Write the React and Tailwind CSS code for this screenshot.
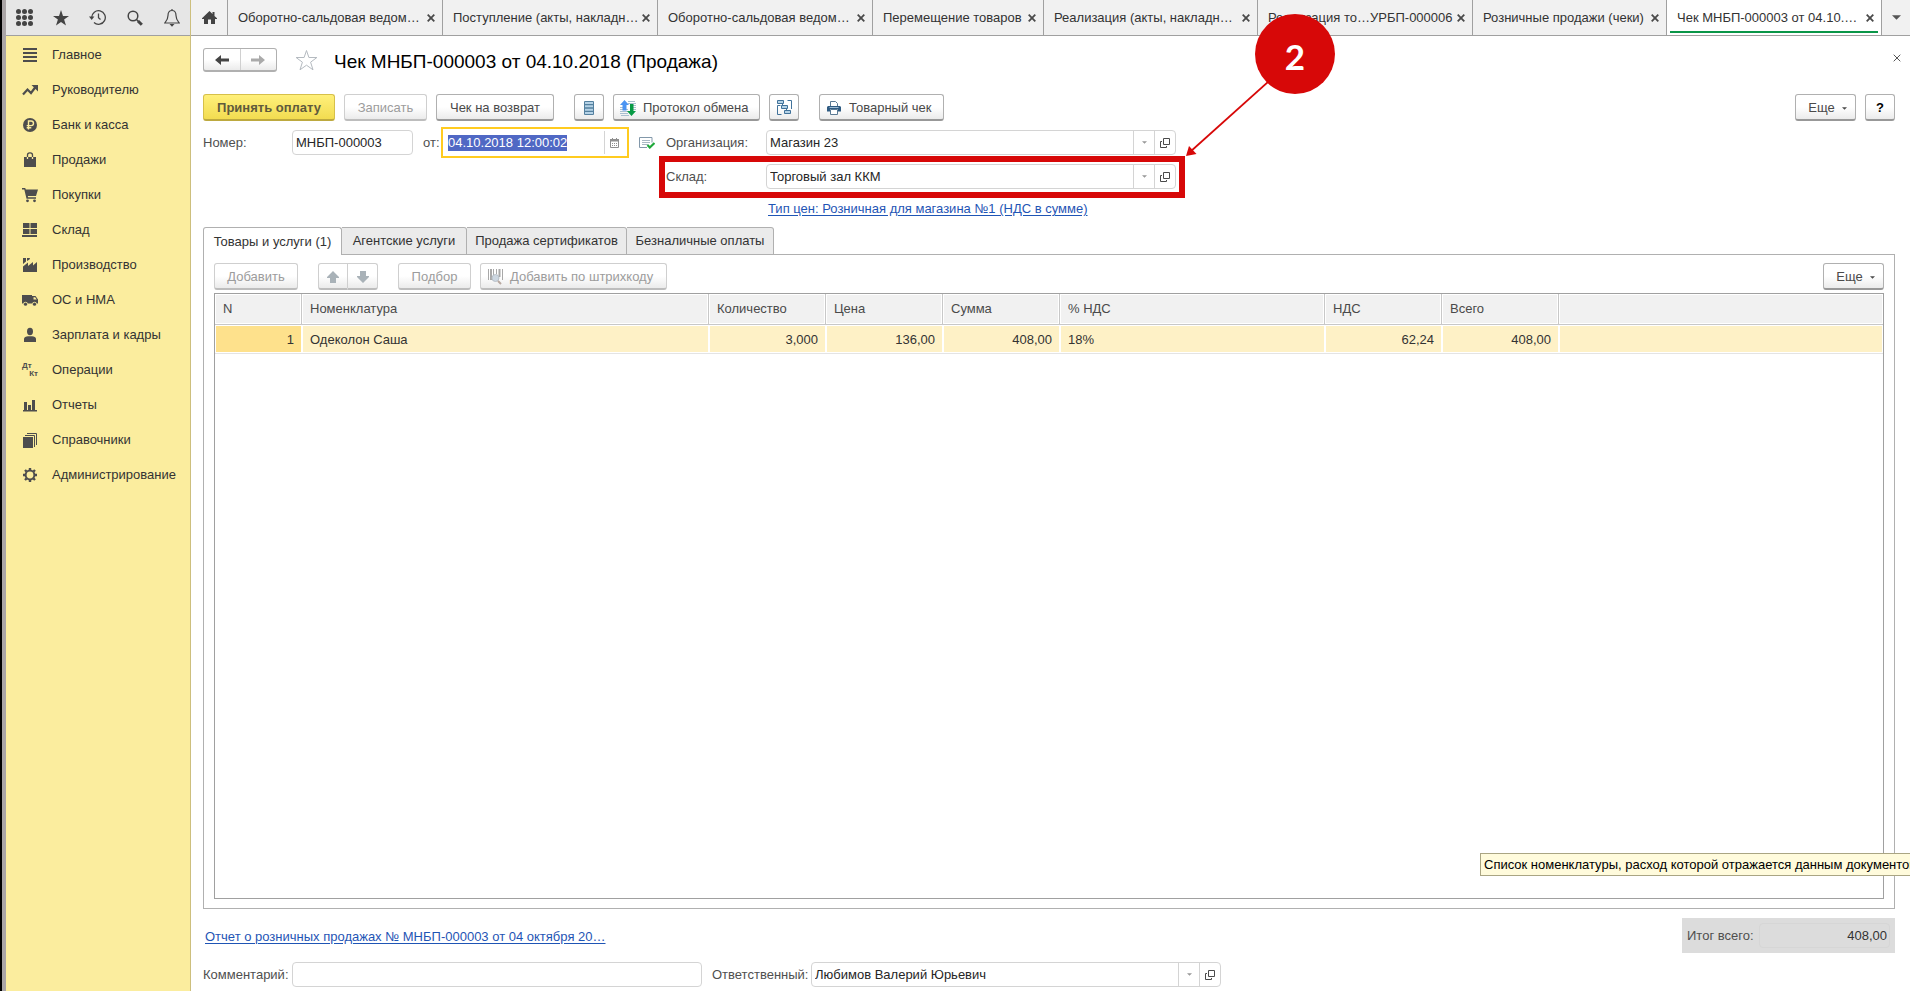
import { useEffect, useRef } from 'react';

const MENU = [
  ['Главное', 'lines'],
  ['Руководителю', 'trend'],
  ['Банк и касса', 'ruble'],
  ['Продажи', 'bag'],
  ['Покупки', 'cart'],
  ['Склад', 'boxes'],
  ['Производство', 'factory'],
  ['ОС и НМА', 'truck'],
  ['Зарплата и кадры', 'person'],
  ['Операции', 'dtkt'],
  ['Отчеты', 'chart'],
  ['Справочники', 'books'],
  ['Администрирование', 'gear'],
];

const WINDOWS = [
  ['Оборотно-сальдовая ведом…', 'w-[215px]'],
  ['Поступление (акты, накладн…', 'w-[215px]'],
  ['Оборотно-сальдовая ведом…', 'w-[215px]'],
  ['Перемещение товаров', 'w-[171px]'],
  ['Реализация (акты, накладн…', 'w-[214px]'],
  ['Реализация то…УРБП-000006', 'w-[215px]'],
  ['Розничные продажи (чеки)', 'w-[194px]'],
  ['Чек МНБП-000003 от 04.10.…', 'w-[215px]'],
];

const MENU_ART = {
  lines: <path d="M1 1h14v2H1zM1 5h14v2H1zM1 9h14v2H1zM1 13h14v2H1z" />,
  trend: (
    <>
      <path d="M1 12.500 5.500 7.500l3.500 3.500L13.500 5" fill="none" stroke="currentColor" strokeWidth="2.200" />
      <path d="M9.500 3H16v6.500z" />
    </>
  ),
  ruble: (
    <>
      <circle cx="8" cy="8" r="7" />
      <path d="M6.500 12.500V4h2.700a2.200 2.200 0 0 1 0 4.600H4.700M4.700 10.700h4.600" fill="none" stroke="#fbed9e" strokeWidth="1.400" />
    </>
  ),
  bag: (
    <>
      <path d="M2 5h12v10H2z" />
      <path d="M5.500 5.500V3A2.200 2.200 0 0 1 7.700.800h.6A2.200 2.200 0 0 1 10.500 3v2.500" fill="none" stroke="currentColor" strokeWidth="1.300" />
      <path d="M5.500 5v2M10.500 5v2" stroke="#fbed9e" strokeWidth="1.300" />
    </>
  ),
  cart: (
    <>
      <path d="M0 1h3.200l.6 1.500H16L14 9H5.800l.3 1.300H14v1.500H4.500L2.300 2.500H0z" />
      <circle cx="5.500" cy="13.800" r="1.400" />
      <circle cx="12.500" cy="13.800" r="1.400" />
    </>
  ),
  boxes: <path d="M1 1h6.500v5H1zM8.500 1H15v5H8.500zM1 7h6.500v5H1zM8.500 7H15v5H8.500zM0 13h15v2H0z" />,
  factory: <path d="M1 15V9.500L6 5.500V9l5-4v3.500l4-3.500v10zM1 7V1h3v3.500zM5 4V1h3l-.5 1.500z" />,
  truck: (
    <>
      <path d="M0 3h10v8.500H0zM10 4h3.500L16 7.500v4h-6z" />
      <path d="M11.500 5.200h1.700l1.500 2.300h-3.200z" fill="#fbed9e" />
      <circle cx="3.500" cy="12" r="2.200" fill="#fbed9e" />
      <circle cx="12.500" cy="12" r="2.200" fill="#fbed9e" />
      <circle cx="3.500" cy="12.200" r="1.600" />
      <circle cx="12.500" cy="12.200" r="1.600" />
    </>
  ),
  person: (
    <>
      <ellipse cx="8" cy="4.500" rx="3" ry="3.700" />
      <path d="M2 15v-3c0-1.800 2-2.800 4-2.800h4c2 0 4 1 4 2.800v3z" />
    </>
  ),
  chart: <path d="M2 5h3v8h1V8h3v5h1V3h3v10h2v1.500H1V13h1z" />,
  books: (
    <>
      <path d="M1 5h10v11H1z" />
      <path d="M3 3.500h9.500V15M5 1.500h9.500V13" fill="none" stroke="currentColor" />
    </>
  ),
  gear: (
    <>
      <circle cx="8" cy="8" r="4.400" fill="none" stroke="currentColor" strokeWidth="2" />
      <path
        d="M8 1v2M8 13v2M1 8h2M13 8h2M3 3l1.500 1.500M11.500 11.500 13 13M3 13l1.500-1.500M11.500 4.500 13 3"
        fill="none"
        stroke="currentColor"
        strokeWidth="2.400"
      />
    </>
  ),
};

function MenuIcon({ kind }) {
  if (kind === 'dtkt') {
    return (
      <span className="flex h-4 w-4 flex-col text-[8px] leading-2 font-bold text-[#4d4d4d]" aria-hidden="true">
        <span>Дт</span>
        <span className="self-end">Кт</span>
      </span>
    );
  }
  return (
    <svg className="h-4 w-4 shrink-0 text-[#4d4d4d]" viewBox="0 0 16 16" fill="currentColor" aria-hidden="true">
      {MENU_ART[kind]}
    </svg>
  );
}

function Cross({ className }) {
  return (
    <svg className={className} viewBox="0 0 8 8" fill="none" stroke="currentColor" aria-hidden="true">
      <path d="M.7.700l6.600 6.600M7.300.700.700 7.300" />
    </svg>
  );
}

function Caret({ className }) {
  return (
    <svg className={className} viewBox="0 0 10 5" fill="currentColor" aria-hidden="true">
      <path d="M0 0h10L5 5z" />
    </svg>
  );
}

const BUTTON = 'flex h-[27px] shrink-0 items-center rounded-[3px] border border-b-2 bg-linear-to-b from-white from-50% to-[#ebebeb] pt-px whitespace-nowrap';
const ENABLED = 'border-[#b0b0b0] border-b-[#989898] text-[#4a4a4a]';
const DISABLED = 'border-[#cfcfcf] border-b-[#bdbdbd] text-[#9c9c9c]';

function Button({ children, className = '', disabled = false, withIcon = false, label }) {
  return (
    <button
      type="button"
      disabled={disabled}
      aria-label={label}
      className={`${BUTTON} ${disabled ? DISABLED : ENABLED} ${withIcon ? 'gap-[7px] pl-[6px]' : 'justify-center'} ${className}`}
    >
      {children}
    </button>
  );
}

function MoreButton() {
  return (
    <Button className="w-[61px] gap-[7px] pl-1">
      Еще
      <Caret className="mt-px h-[3px] w-[5px]" />
    </Button>
  );
}

function PickField({ id, value }) {
  return (
    <div className="flex h-[25px] w-[410px] overflow-hidden rounded-[4px] border border-[#d4d4d4] bg-white">
      <input id={id} defaultValue={value} className="min-w-0 flex-1 px-[3px] text-[#262626] outline-none" />
      <button type="button" aria-label="Выбрать из списка" className="flex w-[21px] items-center justify-center border-l border-[#d4d4d4] text-[#999]">
        <Caret className="h-[3px] w-[5px]" />
      </button>
      <button type="button" aria-label="Открыть" className="flex w-[21px] items-center justify-center border-l border-[#d4d4d4] text-[#4a4a4a]">
        <svg className="h-[10px] w-[10px]" viewBox="0 0 10 10" fill="none" stroke="currentColor" aria-hidden="true">
          <path d="M3.500.500h6v6h-6zM2 3.500H.500v6h6V8" />
        </svg>
      </button>
    </div>
  );
}

function SideTools() {
  const tool = 'flex h-[35px] w-[37px] items-center justify-center text-[#444]';
  return (
    <div className="flex h-9 border-b border-[#a0a0a0] bg-[#e6e6e6]">
      <button type="button" aria-label="Разделы" className={tool}>
        <svg className="h-[17px] w-[17px]" viewBox="0 0 17 17" fill="currentColor" aria-hidden="true">
          {[2.5, 8.5, 14.5].map((y) => [2.5, 8.5, 14.5].map((x) => <circle key={`${x}-${y}`} cx={x} cy={y} r="2.500" />))}
        </svg>
      </button>
      <button type="button" aria-label="Избранное" className={tool}>
        <svg className="h-4 w-4" viewBox="0 0 16 16" fill="currentColor" aria-hidden="true">
          <path d="M8 0l2 5.900h6l-4.900 3.700 1.900 6L8 12l-5 3.600 1.900-6L0 5.900h6z" />
        </svg>
      </button>
      <button type="button" aria-label="История" className={tool}>
        <svg className="h-[17px] w-[17px]" viewBox="0 0 17 17" fill="none" stroke="currentColor" strokeWidth="1.300" aria-hidden="true">
          <path d="M2.700 8.500A6.800 6.800 0 1 1 5 13.600M9.500 4.500v4.200l2 1.800" />
          <path d="M0 7.500h5.400L2.700 11z" fill="currentColor" stroke="none" />
        </svg>
      </button>
      <button type="button" aria-label="Поиск" className={tool}>
        <svg className="h-4 w-4" viewBox="0 0 16 16" fill="none" stroke="currentColor" aria-hidden="true">
          <circle cx="6" cy="6" r="4.800" strokeWidth="1.500" />
          <path d="M9.500 9.500l2 2" strokeWidth="1.500" />
          <path d="M11 11l3.800 3.800" strokeWidth="3" />
        </svg>
      </button>
      <button type="button" aria-label="Оповещения" className={tool}>
        <svg className="h-[18px] w-4" viewBox="0 0 16 18" fill="none" stroke="currentColor" strokeWidth="1.200" aria-hidden="true">
          <path d="M8 1.500c-3 0-4 2-4 5 0 4-1.500 5.500-3.200 7.500h14.400C13.500 12 12 10.500 12 6.500c0-3-1-5-4-5zM8 0v1.500" />
          <path d="M5.500 15h5L8 17.800z" fill="currentColor" stroke="none" />
        </svg>
      </button>
    </div>
  );
}

function WindowTabs() {
  return (
    <div className="flex h-9 border-b border-[#a0a0a0] bg-[#f1f1f1] text-[#333]">
      <button type="button" aria-label="Начальная страница" className="flex w-[37px] shrink-0 items-center justify-center border-r border-[#a0a0a0] text-[#444]">
        <svg className="h-[13px] w-[15px]" viewBox="0 0 15 13" fill="currentColor" aria-hidden="true">
          <path d="M7.500 0l3 3V1h2v4L15 7.300V8h-2v5H9V8.500H6V13H2V8H0v-.7z" />
        </svg>
      </button>
      {WINDOWS.map(([title, width], i) => {
        const active = i === WINDOWS.length - 1;
        return (
          <div key={i} className={`relative flex items-center justify-between border-r border-[#a0a0a0] pr-[7px] pl-[10px] ${width} ${active ? 'bg-white' : ''}`}>
            <a href="#window" className="whitespace-nowrap">{title}</a>
            <button type="button" aria-label="Закрыть окно" className="flex shrink-0 items-center text-[#4a4a4a]">
              <Cross className="h-2 w-2 stroke-[1.8]" />
            </button>
            {active && <span className="absolute inset-x-[3px] bottom-0.5 h-0.5 bg-[#0a9648]" />}
          </div>
        );
      })}
      <button type="button" aria-label="Список окон" className="flex flex-1 items-center justify-center text-[#555]">
        <Caret className="h-[5px] w-[9px]" />
      </button>
    </div>
  );
}

function Callout() {
  return (
    <>
      <div className="pointer-events-none absolute -top-2 -left-[7px] h-[42px] w-[526px] border-6 border-[#d70808]" />
      <svg className="pointer-events-none absolute -top-[83px] left-[519px] h-[76px] w-[84px] text-[#d70808]" viewBox="0 0 84 76" fill="currentColor" aria-hidden="true">
        <path d="M84 0 5 71" stroke="currentColor" strokeWidth="1.700" />
        <path d="M1 75l3-10 7.500 8z" />
      </svg>
      <div className="pointer-events-none absolute -top-[150px] left-[589px] z-20 flex h-20 w-20 items-center justify-center rounded-full bg-[#d70808] pt-1 font-['Lato',sans-serif] text-[35px] font-bold text-white">
        2
      </div>
    </>
  );
}

function DocumentTabs() {
  return (
    <div className="relative z-10 -mb-px flex h-7 text-[#333]" role="tablist">
      <button type="button" role="tab" aria-selected="true" className="w-[139px] rounded-t-[3px] border border-b-0 border-[#b0b0b0] bg-white">
        Товары и услуги (1)
      </button>
      <button type="button" role="tab" aria-selected="false" className="w-[125px] rounded-tr-[3px] border border-l-0 border-[#b0b0b0] bg-[#ebebeb]">
        Агентские услуги
      </button>
      <button type="button" role="tab" aria-selected="false" className="w-[160px] rounded-tr-[3px] border border-l-0 border-[#b0b0b0] bg-[#ebebeb]">
        Продажа сертификатов
      </button>
      <button type="button" role="tab" aria-selected="false" className="w-[147px] rounded-tr-[3px] border border-l-0 border-[#b0b0b0] bg-[#ebebeb]">
        Безналичные оплаты
      </button>
    </div>
  );
}

function Arrow({ className }) {
  return (
    <svg className={className} viewBox="0 0 12 12" fill="currentColor" aria-hidden="true">
      <path d="M6 0l6 6v1H9v5H3V7H0V6z" />
    </svg>
  );
}

function GoodsTable() {
  const head = 'border-r border-b border-[#c8c8c8] bg-[#f1f1f1] px-2 text-left font-normal text-[#4a4a4a] shadow-[inset_0_0_0_1px_white]';
  const cell = 'border-b border-[#e4e4e4] px-2 pt-0.5 shadow-[inset_0_0_0_1px_white]';
  return (
    <div className="mt-[3px] flex-1 border border-[#a0a0a0] bg-white">
      <table className="w-full table-fixed border-separate border-spacing-0 text-[#333]">
        <colgroup>
          <col className="w-[87px]" />
          <col className="w-[407px]" />
          <col className="w-[117px]" />
          <col className="w-[117px]" />
          <col className="w-[117px]" />
          <col className="w-[265px]" />
          <col className="w-[117px]" />
          <col className="w-[117px]" />
          <col />
        </colgroup>
        <thead>
          <tr className="h-[31px]">
            {['N', 'Номенклатура', 'Количество', 'Цена', 'Сумма', '% НДС', 'НДС', 'Всего'].map((title) => (
              <th key={title} scope="col" className={head}>{title}</th>
            ))}
            <td className="border-b border-[#c8c8c8] bg-[#f1f1f1] shadow-[inset_0_0_0_1px_white]" />
          </tr>
        </thead>
        <tbody>
          <tr className="h-[29px] bg-[#fef1c6]">
            <td className={`${cell} bg-[#fee18c] text-right`}>1</td>
            <td className={cell}>Одеколон Саша</td>
            <td className={`${cell} text-right`}>3,000</td>
            <td className={`${cell} text-right`}>136,00</td>
            <td className={`${cell} text-right`}>408,00</td>
            <td className={cell}>18%</td>
            <td className={`${cell} text-right`}>62,24</td>
            <td className={`${cell} text-right`}>408,00</td>
            <td className={cell} />
          </tr>
        </tbody>
      </table>
    </div>
  );
}

export default function App() {
  const dateRef = useRef(null);
  useEffect(() => {
    dateRef.current.focus();
    dateRef.current.select();
  }, []);

  return (
    <div className="flex min-h-screen overflow-hidden bg-white font-['Liberation_Sans',Arial,sans-serif] text-[13px] leading-4">
      <div className="w-[6px] shrink-0 border-l-2 border-black bg-[#aaa5a6]" />
      <aside className="flex w-[185px] shrink-0 flex-col border-r border-[#cdbf7d] bg-[#fbed9e]">
        <SideTools />
        <nav className="flex flex-col pt-px text-[#333]">
          {MENU.map(([title, icon]) => (
            <a key={title} href="#section" className="flex h-[35px] items-center gap-[14px] pl-4">
              <MenuIcon kind={icon} />
              {title}
            </a>
          ))}
        </nav>
      </aside>

      <div className="flex min-w-0 flex-1 flex-col">
        <WindowTabs />
        <main className="relative flex flex-1 flex-col pt-3 pr-[15px] pb-1 pl-3 text-[#4f4f4f]">
          <button type="button" aria-label="Закрыть" className="absolute top-[18px] right-[9px] text-[#555]">
            <Cross className="h-2 w-2 stroke-1" />
          </button>

          <div className="flex h-6 items-center">
            <div className="flex h-6 w-[74px] rounded-[3px] border border-b-2 border-[#b0b0b0] bg-linear-to-b from-white from-50% to-[#ebebeb]">
              <button type="button" aria-label="Назад" className="flex flex-1 items-center justify-center text-[#444]">
                <svg className="h-[10px] w-[14px]" viewBox="0 0 14 10" fill="currentColor" aria-hidden="true">
                  <path d="M0 5l6-5v3.500h8v3H6V10z" />
                </svg>
              </button>
              <button type="button" aria-label="Вперед" disabled className="flex flex-1 items-center justify-center border-l border-[#d0d0d0] text-[#aaa]">
                <svg className="h-[10px] w-[14px]" viewBox="0 0 14 10" fill="currentColor" aria-hidden="true">
                  <path d="M14 5L8 0v3.500H0v3h8V10z" />
                </svg>
              </button>
            </div>
            <button type="button" aria-label="В избранное" className="ml-[18px] text-[#b4bac0]">
              <svg className="h-[22px] w-[23px]" viewBox="0 0 23 22" fill="none" stroke="currentColor" aria-hidden="true">
                <path d="M11.500 1.500l2.400 7h8l-6.300 4.700 2.400 7.600-6.500-4.600L5 20.800l2.400-7.600L1.100 8.500h8z" />
              </svg>
            </button>
            <h1 className="ml-4 pt-1 text-[19px] leading-6 text-black">Чек МНБП-000003 от 04.10.2018 (Продажа)</h1>
          </div>

          <div className="mt-[22px] flex items-center">
            <button type="button" className="flex h-[27px] w-[132px] items-center justify-center rounded-[3px] border border-b-2 border-[#d6c04a] border-b-[#bda93f] bg-linear-to-b from-[#fff07a] to-[#f2dc50] pt-px font-bold text-[#5f5a3c]">
              Принять оплату
            </button>
            <Button disabled className="ml-[9px] w-[83px]">Записать</Button>
            <Button className="ml-[9px] w-[118px]">Чек на возврат</Button>
            <Button label="Реестр" className="ml-5 w-[30px]">
              <svg className="h-[14px] w-[10px]" viewBox="0 0 10 14" aria-hidden="true">
                <rect width="10" height="14" rx="1" fill="#54809f" />
                <path d="M1 2h8M1 5.300h8M1 8.700h8M1 12h8" stroke="#b5d2e6" strokeWidth="2" />
              </svg>
            </Button>
            <Button withIcon className="ml-[9px] w-[147px]">
              <svg className="h-4 w-4" viewBox="0 0 16 16" aria-hidden="true">
                <path d="M0 7.500h3M0 9.500h8M0 11.500h8M0 13.500h8M1 15.500h8M8 1.500h7M8 3.500h8M13 5.500h3M13 7.500h3M13 9.500h3" stroke="#a9bfd0" />
                <path d="M4.500 0L9 5H6.500v5.500h-4V5H0z" fill="#4b94f2" />
                <path d="M11.500 16L16 11h-2.500V4h-3.500v7H7z" fill="#079a45" />
              </svg>
              Протокол обмена
            </Button>
            <Button label="Структура подчиненности" className="ml-[9px] w-[30px]">
              <svg className="h-[15px] w-[15px]" viewBox="0 0 15 15" fill="none" stroke="#41729a" aria-hidden="true">
                <path d="M3.500 5.500H.500v9h4M10.500.500h4v8.500M5.500 4v2M9.500 9v2" />
                <path d="M.5.500h6v3h-6zM4.500 5.500h6v3h-6zM7.500 10.500h6v3h-6z" fill="#b5d2e6" />
              </svg>
            </Button>
            <Button withIcon className="ml-5 w-[125px]">
              <svg className="h-[14px] w-4" viewBox="0 0 16 14" aria-hidden="true">
                <path d="M4.500 5V.500h5l2 2V5" fill="#fff" stroke="#5b7a94" />
                <path d="M2 5h12l1 1v4.500h-3V8H4v2.500H1V6z" fill="#2f5b82" />
                <path d="M3.500 6.500h9" stroke="#9dbdd6" />
                <path d="M4.500 8.500h7v5h-7z" fill="#fff" stroke="#5b7a94" />
              </svg>
              Товарный чек
            </Button>
            <div className="ml-auto flex gap-[9px]">
              <MoreButton />
              <Button className="w-[30px] font-bold text-black">?</Button>
            </div>
          </div>

          <div className="mt-[9px] flex items-start">
            <div className="flex h-[25px] items-center">
              <label htmlFor="number" className="w-[89px]">Номер:</label>
              <input id="number" defaultValue="МНБП-000003" className="h-[25px] w-[121px] rounded-[4px] border border-[#d4d4d4] px-[3px] text-[#262626] outline-none" />
              <label htmlFor="date" className="ml-[10px] w-[18px]">от:</label>
              <div className="flex h-[31px] w-[188px] items-center border-2 border-[#ffcb1f] bg-white pr-[3px] pl-[5px]">
                <input
                  id="date"
                  ref={dateRef}
                  defaultValue="04.10.2018 12:00:02"
                  className="h-4 min-w-0 flex-1 text-[#262626] outline-none selection:bg-[#5068c4] selection:text-white"
                />
                <button type="button" aria-label="Календарь" className="flex h-[23px] w-5 items-center justify-center border-l border-[#d4d4d4] text-[#8f8f8f]">
                  <svg className="h-[10px] w-[9px]" viewBox="0 0 9 10" aria-hidden="true">
                    <path d="M.5 1.500h8v8h-8z" fill="none" stroke="currentColor" />
                    <path d="M0 1h9v2.500H0zM2 0h1v2H2zM6 0h1v2H6zM2 5h1v1H2zM4 5h1v1H4zM6 5h1v1H6zM2 7h1v1H2zM4 7h1v1H4zM6 7h1v1H6z" fill="currentColor" />
                  </svg>
                </button>
              </div>
              <button type="button" aria-label="Документ проведен" className="ml-[10px]">
                <svg className="h-3 w-4" viewBox="0 0 16 12" fill="none" aria-hidden="true">
                  <path d="M8 10.500H.500v-10h12.500v5" stroke="#8298aa" />
                  <path d="M3 3.500h8M3 5.500h8M3 7.500h6" stroke="#a9b8c4" />
                  <path d="M8.500 8l2.300 2.500L15.500 6" stroke="#1fa83a" strokeWidth="2.200" />
                </svg>
              </button>
            </div>
            <div className="ml-[11px] flex flex-col">
              <div className="flex items-center">
                <label htmlFor="org" className="w-[100px]">Организация:</label>
                <PickField id="org" value="Магазин 23" />
              </div>
              <div className="relative mt-[9px] flex items-center">
                <label htmlFor="store" className="w-[100px]">Склад:</label>
                <PickField id="store" value="Торговый зал ККМ" />
                <Callout />
              </div>
              <a href="#prices" className="mt-3 ml-[102px] self-start text-[#1f55b5] underline underline-offset-2">
                Тип цен: Розничная для магазина №1 (НДС в сумме)
              </a>
            </div>
          </div>

          <div className="mt-[10px] flex flex-1 flex-col">
            <DocumentTabs />
            <section className="flex flex-1 flex-col border border-[#b0b0b0] px-[10px] pt-2 pb-[9px]">
              <div className="flex items-center">
                <Button disabled className="w-[84px]">Добавить</Button>
                <div className="ml-5 flex">
                  <Button disabled label="Переместить вверх" className="w-[30px] rounded-r-none">
                    <Arrow className="h-3 w-3 text-[#a9b2b8]" />
                  </Button>
                  <Button disabled label="Переместить вниз" className="w-[30px] rounded-l-none border-l-0">
                    <Arrow className="h-3 w-3 rotate-180 text-[#a9b2b8]" />
                  </Button>
                </div>
                <Button disabled className="ml-5 w-[73px]">Подбор</Button>
                <Button disabled withIcon className="ml-[9px] w-[187px]">
                  <svg className="h-4 w-4" viewBox="0 0 16 16" fill="none" aria-hidden="true">
                    <path d="M1.500 0v11M6.500 0v6M9.500 0v5M15.500 0v11" stroke="#a8a8a8" />
                    <path d="M4 0v11M12.500 0v8" stroke="#a8a8a8" strokeWidth="2" />
                    <circle cx="8.500" cy="9" r="3.500" fill="#cdd7e1" stroke="#b8c0c8" />
                    <path d="M11 12l3 3" stroke="#b8a8a0" strokeWidth="2" />
                  </svg>
                  Добавить по штрихкоду
                </Button>
                <div className="ml-auto">
                  <MoreButton />
                </div>
              </div>
              <GoodsTable />
            </section>
          </div>

          <div className="relative mt-[9px] flex h-[35px] items-center justify-between">
            <a href="#report" className="ml-0.5 pt-0.5 text-[#1f55b5] underline underline-offset-2">
              Отчет о розничных продажах № МНБП-000003 от 04 октября 20…
            </a>
            <div className="flex h-[35px] items-center bg-[#dcdcdc] pr-[5px] pl-[5px]">
              <label htmlFor="total" className="w-[72px]">Итог всего:</label>
              <input id="total" readOnly defaultValue="408,00" className="h-[25px] w-[131px] rounded-[4px] border border-[#d6d6d6] px-[2px] text-right text-[#333] outline-none" />
            </div>
            <div role="tooltip" className="absolute -top-[65px] -right-[15px] h-[23px] w-[430px] overflow-hidden border border-r-0 border-[#aaa583] bg-[#fffbdc] pl-[3px] leading-[21px] whitespace-nowrap text-black">
              Список номенклатуры, расход которой отражается данным документом
            </div>
          </div>

          <div className="mt-[9px] flex items-center">
            <label htmlFor="comment" className="w-[89px]">Комментарий:</label>
            <input id="comment" className="h-[25px] w-[410px] rounded-[4px] border border-[#d4d4d4] px-[3px] outline-none" />
            <label htmlFor="owner" className="ml-[10px] w-[99px]">Ответственный:</label>
            <PickField id="owner" value="Любимов Валерий Юрьевич" />
          </div>
        </main>
      </div>
    </div>
  );
}
